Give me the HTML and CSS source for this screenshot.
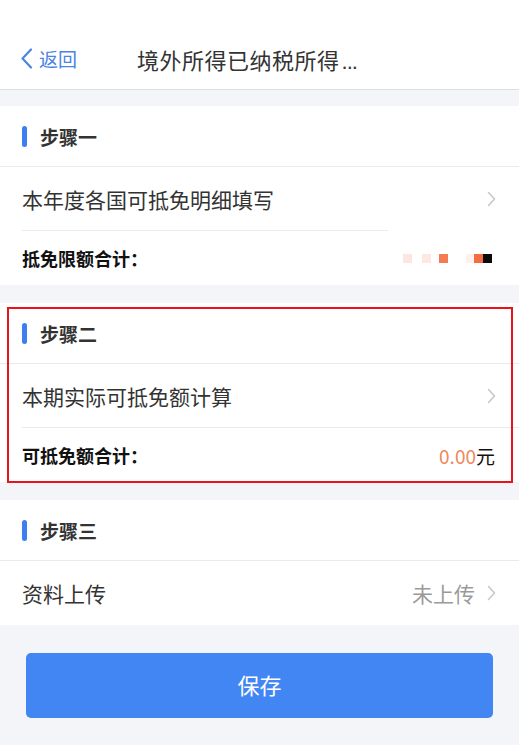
FILE: index.html
```html
<!DOCTYPE html>
<html lang="zh-CN">
<head>
  <meta charset="UTF-8" />
  <meta name="viewport" content="width=device-width, initial-scale=1.0" />
  <title>境外所得已纳税所得额</title>
  <link rel="stylesheet" href="styles.css">
</head>
<body>

  <!-- 导航栏 -->
  <div class="nav">
    <div class="nav-back">
      <svg width="13" height="21" viewBox="0 0 13 21"><path d="M11 1.5 L2.5 10.5 L11 19.5" fill="none" stroke="#4a84e6" stroke-width="2.2" stroke-linecap="round" stroke-linejoin="round"/></svg>
      <span>返回</span>
    </div>
    <div class="nav-title">境外所得已纳税所得<span class="dots">...</span></div>
  </div>

  <!-- 步骤一 -->
  <div class="section">
    <div class="sec-head"><i class="bar"></i>步骤一</div>
    <div class="row row-cut">
      <span>本年度各国可抵免明细填写</span>
      <svg class="arrow" width="9" height="16" viewBox="0 0 9 16"><path d="M1.5 1.5 L7.5 8 L1.5 14.5" fill="none" stroke="#c8c8cc" stroke-width="1.6" stroke-linecap="round" stroke-linejoin="round"/></svg>
    </div>
    <div class="row-total">
      <span>抵免限额合计：</span>
      <svg class="mosaic" width="90" height="9" viewBox="0 0 90 9">
        <rect x="0" y="0" width="9" height="9" fill="#fde6e2"/>
        <rect x="19" y="0" width="9" height="9" fill="#fde8e4"/>
        <rect x="36" y="0" width="9" height="9" fill="#f47a52"/>
        <rect x="63" y="0" width="8" height="9" fill="#fdf1ee"/>
        <rect x="71" y="0" width="9" height="9" fill="#f56b42"/>
        <rect x="80" y="0" width="9" height="9" fill="#0a0a0a"/>
      </svg>
    </div>
  </div>

  <!-- 步骤二 -->
  <div class="section sec-mark">
    <div class="sec-head"><i class="bar"></i>步骤二</div>
    <div class="row">
      <span>本期实际可抵免额计算</span>
      <svg class="arrow" width="9" height="16" viewBox="0 0 9 16"><path d="M1.5 1.5 L7.5 8 L1.5 14.5" fill="none" stroke="#c8c8cc" stroke-width="1.6" stroke-linecap="round" stroke-linejoin="round"/></svg>
    </div>
    <div class="row-total">
      <span>可抵免额合计：</span>
      <span class="amount"><em>0.00</em>元</span>
    </div>
  </div>

  <!-- 步骤三 -->
  <div class="section">
    <div class="sec-head"><i class="bar"></i>步骤三</div>
    <div class="row row-last">
      <span>资料上传</span>
      <span class="status">未上传<svg class="arrow" width="9" height="16" viewBox="0 0 9 16"><path d="M1.5 1.5 L7.5 8 L1.5 14.5" fill="none" stroke="#c8c8cc" stroke-width="1.6" stroke-linecap="round" stroke-linejoin="round"/></svg></span>
    </div>
  </div>

  <div class="footer">
    <button class="btn-save">保存</button>
  </div>

</body>
</html>
```

FILE: styles.css
```css
* { margin: 0; padding: 0; box-sizing: border-box; }
html, body {
  width: 100%;
  height: 100%;
  background: #f4f5f8;
  font-family: "Noto Sans CJK SC", "Noto Sans", sans-serif;
  color: #333;
  overflow: hidden;
}

/* 导航 */
.nav {
  height: 90px;
  padding-top: 28px;
  background: #fff;
  border-bottom: 1px solid #dedfe3;
  display: flex;
  align-items: center;
}
.nav-back {
  display: flex;
  align-items: center;
  padding-left: 20px;
  color: #4a84e6;
  font-size: 19px;
}
.nav-back svg { margin-right: 6px; }
.nav-title {
  margin-left: 60px;
  font-size: 22px;
  letter-spacing: 0.5px;
  color: #333;
}
.dots {
  font-family: "Liberation Sans", sans-serif;
  letter-spacing: -1px;
  margin-left: 2px;
}

/* 分组 */
.section {
  background: #fff;
  margin-top: 16px;
}
.section + .section { margin-top: 18px; }
.section:last-of-type { margin-top: 16px; }

.sec-head {
  height: 61px;
  display: flex;
  align-items: center;
  padding-left: 22px;
  font-size: 19px;
  font-weight: bold;
  color: #333;
  border-bottom: 1px solid #ebebee;
}
.bar {
  display: inline-block;
  width: 5px;
  height: 21px;
  border-radius: 3px;
  background: #3d7ff0;
  margin-right: 13px;
}

.row {
  height: 64px;
  margin-left: 22px;
  padding-right: 23px;
  display: flex;
  align-items: center;
  justify-content: space-between;
  font-size: 21px;
  color: #333;
  border-bottom: 1px solid #ebebee;
}
.row-cut {
  border-bottom: none;
  background: linear-gradient(#ebebee, #ebebee) no-repeat left bottom / 366px 1px;
}
.row-last { border-bottom: none; }

.status {
  display: flex;
  align-items: center;
  gap: 12px;
  color: #9a9a9a;
}

.row-total {
  height: 54px;
  padding: 0 24px 0 22px;
  display: flex;
  align-items: center;
  justify-content: space-between;
  font-size: 18px;
  font-weight: bold;
  color: #111;
}
.mosaic { margin-right: 2px; }
.amount {
  font-size: 19px;
  font-weight: normal;
  color: #111;
}
.amount em {
  font-style: normal;
  color: #f0895a;
}

/* 红框标注 */
.sec-mark { position: relative; }
.sec-mark::after {
  content: "";
  position: absolute;
  left: 7px;
  top: 4px;
  width: 502px;
  height: 172px;
  border: 2px solid #e8141c;
  pointer-events: none;
}

/* 保存 */
.footer { padding: 28px 26px; }
.btn-save {
  width: 100%;
  height: 65px;
  border: none;
  border-radius: 5px;
  background: #4286f3;
  color: #fff;
  font-size: 22px;
  font-family: inherit;
  padding-bottom: 4px;
}
```
